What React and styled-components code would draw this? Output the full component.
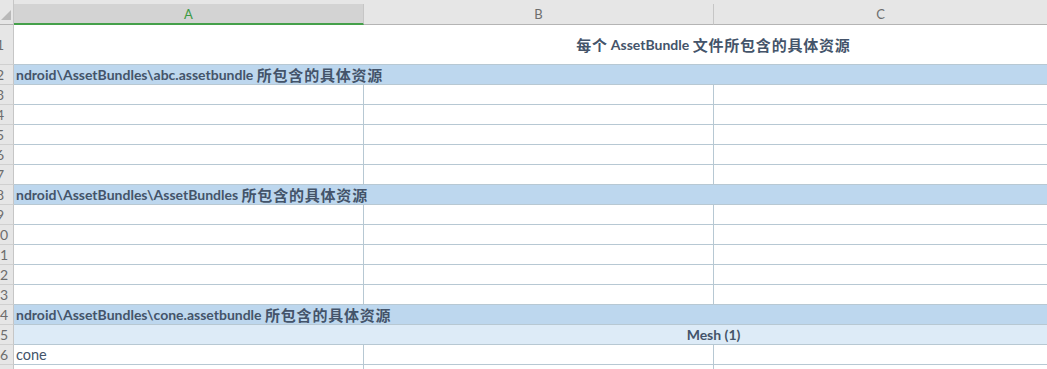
import styled, { createGlobalStyle } from "styled-components";

const GRID = "#b7c8d3";
const HEAD_LINE = "#c6c6c6";
const INK = "#44546a";

const GlobalStyle = createGlobalStyle`
  html, body {
    margin: 0;
    background: #fff;
    font-family: Lato, "Noto Sans CJK SC", sans-serif;
  }
`;

const rows = [
  { n: 1, kind: "title", h: 40, text: "每个 AssetBundle 文件所包含的具体资源" },
  { n: 2, kind: "group", text: "ndroid\\AssetBundles\\abc.assetbundle 所包含的具体资源" },
  { n: 3 }, { n: 4 }, { n: 5 }, { n: 6 }, { n: 7 },
  { n: 8, kind: "group", text: "ndroid\\AssetBundles\\AssetBundles 所包含的具体资源" },
  { n: 9 }, { n: 10 }, { n: 11 }, { n: 12 }, { n: 13 },
  { n: 14, kind: "group", text: "ndroid\\AssetBundles\\cone.assetbundle 所包含的具体资源" },
  { n: 15, kind: "sub", text: "Mesh (1)" },
  { n: 16, a: "cone" },
  { n: 17 },
];

// split a label into latin and CJK runs so each gets its own metrics
const Mixed = ({ text }) =>
  text
    .split(/([\u4e00-\u9fff]+)/)
    .filter(Boolean)
    .map((part, i) =>
      /[\u4e00-\u9fff]/.test(part) ? <Cjk key={i}>{part}</Cjk> : <span key={i}>{part}</span>
    );

const App = () => (
  <>
    <GlobalStyle />
    <Sheet>
      <HeaderRow>
        <Corner>
          <svg width="10" height="10" viewBox="0 0 10 10">
            <polygon points="10,0 10,10 0,10" fill="#b9b9b9" />
          </svg>
        </Corner>
        <ColHead $active>A</ColHead>
        <ColHead>B</ColHead>
        <ColHead $last>C</ColHead>
      </HeaderRow>

      {rows.map((r) => (
        <Row key={r.n} $h={r.h || 20}>
          <RowHead>
            <Num>{r.n}</Num>
          </RowHead>
          {r.kind === "title" && (
            <Merged $align="center" $bold>
              <Mixed text={r.text} />
            </Merged>
          )}
          {r.kind === "group" && (
            <Merged $bg="#bdd7ee" $bold>
              <Mixed text={r.text} />
            </Merged>
          )}
          {r.kind === "sub" && (
            <Merged $bg="#ddebf7" $bold $align="center">
              {r.text}
            </Merged>
          )}
          {!r.kind && (
            <>
              <Cell>{r.a}</Cell>
              <Cell />
              <Cell $last />
            </>
          )}
        </Row>
      ))}
    </Sheet>
  </>
);

export default App;

const Sheet = styled.div`
  width: 1047px;
  height: 369px;
  overflow: hidden;
  background: #fff;
`;

const HeaderRow = styled.div`
  display: flex;
  height: 25px;
  background: #e6e6e6;
  padding-top: 4px;
  box-sizing: border-box;
`;

const Corner = styled.div`
  width: 14px;
  flex: none;
  margin-top: -4px;
  display: flex;
  align-items: flex-end;
  justify-content: flex-end;
  padding: 0 2px 4px 0;
  box-sizing: border-box;
  border-right: 1px solid ${HEAD_LINE};
  border-bottom: 1px solid #b4b4b4;
`;

const ColHead = styled.div`
  width: ${({ $last }) => ($last ? "auto" : "350px")};
  flex: ${({ $last }) => ($last ? "1" : "none")};
  display: flex;
  align-items: center;
  justify-content: center;
  font-family: Lato, sans-serif;
  font-size: 13px;
  color: ${({ $active }) => ($active ? "#3c9a44" : "#6d6d6d")};
  background: ${({ $active }) => ($active ? "#d3d3d3" : "#e6e6e6")};
  border-right: ${({ $last }) => ($last ? "none" : `1px solid ${HEAD_LINE}`)};
  border-bottom: ${({ $active }) =>
    $active ? "2px solid #45a04a" : "1px solid #b4b4b4"};
  box-sizing: border-box;
  padding-top: ${({ $active }) => ($active ? "1px" : "0")};
`;

const Row = styled.div`
  display: flex;
  height: ${({ $h }) => $h}px;
  overflow: hidden;
`;

const RowHead = styled.div`
  width: 14px;
  flex: none;
  overflow: hidden;
  background: #e6e6e6;
  border-right: 1px solid ${HEAD_LINE};
  border-bottom: 1px solid #d0d0d0;
  box-sizing: border-box;
  display: flex;
  align-items: center;
`;

const Num = styled.span`
  flex: none;
  width: 28px;
  margin-left: -14px;
  text-align: center;
  font-family: Lato, sans-serif;
  font-size: 14px;
  color: #6d6d6d;
`;

const Cell = styled.div`
  width: ${({ $last }) => ($last ? "auto" : "350px")};
  flex: ${({ $last }) => ($last ? "1" : "none")};
  box-sizing: border-box;
  border-right: ${({ $last }) => ($last ? "none" : `1px solid ${GRID}`)};
  border-bottom: 1px solid ${GRID};
  padding: 0 3px 0 2px;
  display: flex;
  align-items: center;
  font-size: 14.5px;
  color: ${INK};
  white-space: nowrap;
`;

const Merged = styled.div`
  flex: none;
  width: 1400px;
  box-sizing: border-box;
  background: ${({ $bg }) => $bg || "#fff"};
  border-bottom: 1px solid ${GRID};
  padding: 0 3px 0 2px;
  display: flex;
  align-items: center;
  justify-content: ${({ $align }) => ($align === "center" ? "center" : "flex-start")};
  font-size: 14px;
  font-weight: ${({ $bold }) => ($bold ? 700 : 400)};
  color: ${INK};
  white-space: pre;
`;

const Cjk = styled.span`
  font-family: "Noto Sans CJK SC", sans-serif;
  font-size: 15px;
  letter-spacing: 0.8px;
`;
